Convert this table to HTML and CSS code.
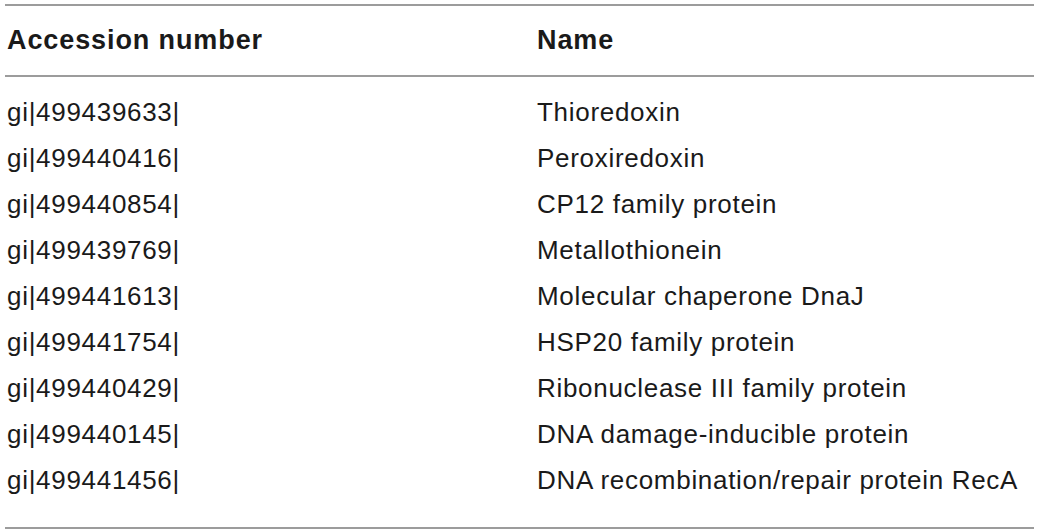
FILE: index.html
```html
<!DOCTYPE html>
<html lang="en">
<head>
<meta charset="utf-8">
<title>Table</title>
<link rel="stylesheet" href="styles.css">
</head>
<body>
<table class="data">
  <thead>
    <tr><th class="c1">Accession number</th><th class="c2">Name</th></tr>
  </thead>
  <tbody>
    <tr class="first"><td class="c1">gi|499439633|</td><td class="c2">Thioredoxin</td></tr>
    <tr><td class="c1">gi|499440416|</td><td class="c2">Peroxiredoxin</td></tr>
    <tr><td class="c1">gi|499440854|</td><td class="c2">CP12 family protein</td></tr>
    <tr><td class="c1">gi|499439769|</td><td class="c2">Metallothionein</td></tr>
    <tr><td class="c1">gi|499441613|</td><td class="c2">Molecular chaperone DnaJ</td></tr>
    <tr><td class="c1">gi|499441754|</td><td class="c2">HSP20 family protein</td></tr>
    <tr><td class="c1">gi|499440429|</td><td class="c2">Ribonuclease III family protein</td></tr>
    <tr><td class="c1">gi|499440145|</td><td class="c2">DNA damage-inducible protein</td></tr>
    <tr class="last"><td class="c1">gi|499441456|</td><td class="c2">DNA recombination/repair protein RecA</td></tr>
  </tbody>
</table>
</body>
</html>
```
FILE: styles.css
```css
html, body {
  margin: 0;
  padding: 0;
  background: #ffffff;
}
body {
  padding: 4px 6px 0 5px;
  font-family: "Liberation Sans", Arial, Helvetica, sans-serif;
  color: #1a1a1a;
}
.data {
  width: 1029px;
  border-collapse: collapse;
  border-top: 2px solid #9c9c9c;
  border-bottom: 2px solid #9c9c9c;
}
.data th {
  font-weight: bold;
  font-size: 27px;
  letter-spacing: 0.9px;
  text-align: left;
  height: 69px;
  padding: 0 0 0 2px;
  vertical-align: middle;
  border-bottom: 2px solid #9c9c9c;
}
.data td {
  font-size: 26px;
  letter-spacing: 0.7px;
  font-weight: normal;
  height: 46px;
  padding: 0 0 0 2px;
  vertical-align: middle;
  white-space: nowrap;
}
.data .c1 {
  width: 530px;
}
.data .c2 {
  padding-left: 0;
}
.data tr.first td {
  padding-top: 12px;
}
.data tr.last td {
  padding-bottom: 24px;
}
```
